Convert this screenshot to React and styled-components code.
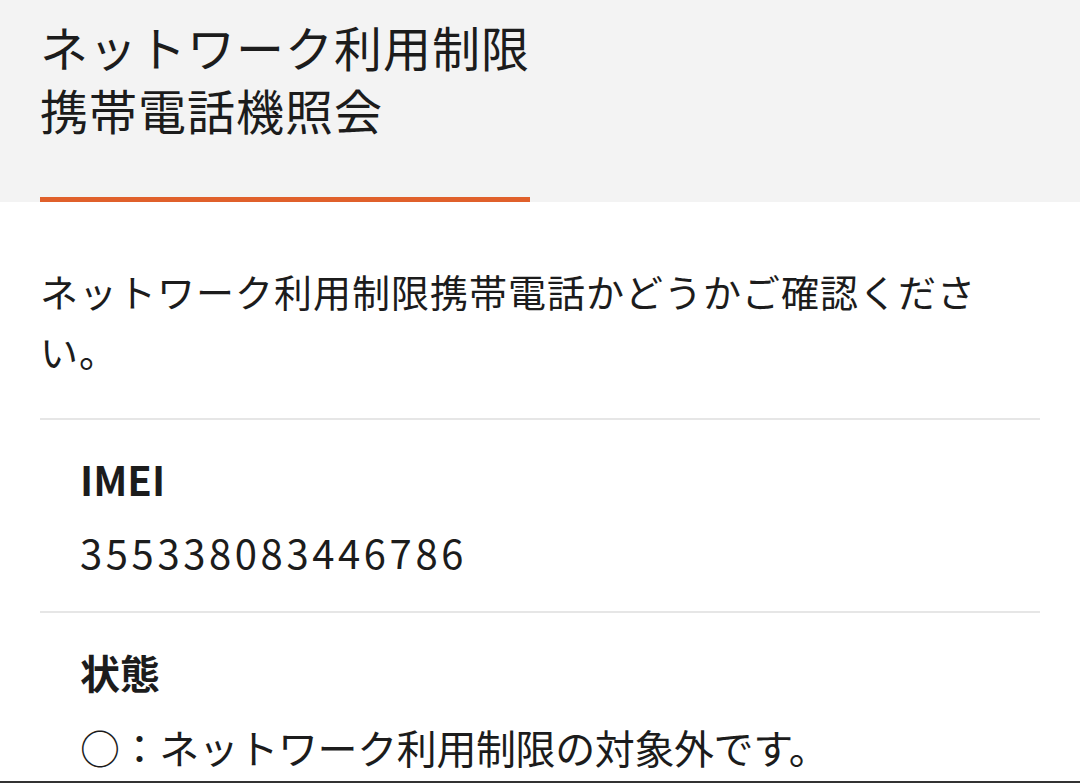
import React from 'react';
import styled, { createGlobalStyle } from 'styled-components';

const GlobalStyle = createGlobalStyle`
  * {
    box-sizing: border-box;
  }
  body {
    margin: 0;
    background: #ffffff;
    color: #1c1c1c;
    font-family: "Noto Sans CJK JP", "Noto Sans", sans-serif;
  }
`;

const Page = styled.div`
  display: flex;
  flex-direction: column;
  min-height: 100vh;
`;

const Header = styled.header`
  display: flex;
  flex-direction: column;
  align-items: flex-start;
  background: #f3f3f3;
  padding: 15px 40px 0;
  height: 202px;
`;

const TitleTab = styled.div`
  display: flex;
  flex-direction: column;
  justify-content: flex-start;
  width: 490px;
  flex: 1;
  border-bottom: 5px solid #e0602b;
`;

const Title = styled.h1`
  margin: 0;
  font-size: 48px;
  font-weight: 400;
  line-height: 63px;
  letter-spacing: 1px;
`;

const Content = styled.main`
  display: flex;
  flex-direction: column;
  padding: 59px 40px 0;
`;

const Lead = styled.p`
  margin: 0 0 37px;
  font-size: 38px;
  line-height: 60px;
  letter-spacing: 1px;
`;

const InfoList = styled.dl`
  margin: 0;
  display: flex;
  flex-direction: column;
`;

const InfoItem = styled.div`
  display: flex;
  flex-direction: column;
  gap: ${(p) => p.$gap || 13}px;
  padding: 29px 40px ${(p) => (p.$last ? 0 : 29)}px;
  border-top: 2px solid #e6e6e6;
`;

const Label = styled.dt`
  margin: 0;
  font-size: 40px;
  font-weight: 700;
  line-height: 60px;
`;

const Value = styled.dd`
  margin: 0;
  font-size: 40px;
  line-height: 60px;
  letter-spacing: ${(p) => p.$spacing || 0}px;
`;

const BottomEdge = styled.div`
  margin-top: auto;
  height: 2px;
  background: #333333;
`;

const items = [
  { label: 'IMEI', value: '355338083446786', spacing: 3.6 },
  { label: '状態', value: '○：ネットワーク利用制限の対象外です。', spacing: -0.4, gap: 15, last: true },
];

const App = () => {
  return (
    <>
      <GlobalStyle />
      <Page>
        <Header>
          <TitleTab>
            <Title>
              ネットワーク利用制限
              <br />
              携帯電話機照会
            </Title>
          </TitleTab>
        </Header>
        <Content>
          <Lead>ネットワーク利用制限携帯電話かどうかご確認ください。</Lead>
          <InfoList>
            {items.map((item) => (
              <InfoItem key={item.label} $gap={item.gap} $last={item.last}>
                <Label>{item.label}</Label>
                <Value $spacing={item.spacing}>{item.value}</Value>
              </InfoItem>
            ))}
          </InfoList>
        </Content>
        <BottomEdge />
      </Page>
    </>
  );
};

export default App;
